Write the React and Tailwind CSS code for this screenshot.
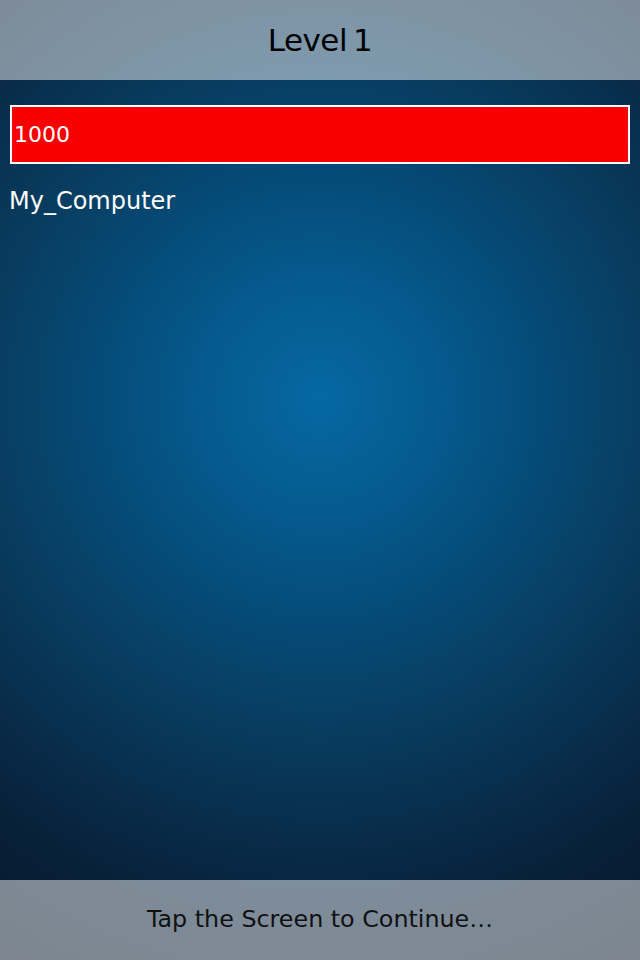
import React from "react";

const App = () => {
  return (
    <div className="flex h-[960px] w-[640px] flex-col bg-[radial-gradient(circle_at_50%_41.5%,#0668a2_0px,#055a8e_120px,#054a76_230px,#083e62_320px,#082f4e_420px,#08213a_520px,#061728_650px)] font-['DejaVu_Sans','Verdana',sans-serif]">
      <header className="flex h-[80px] shrink-0 items-center justify-center bg-white/[0.48]">
        <h1 className="text-[31px] leading-none tracking-[-0.5px] text-black">
          Level<span className="ml-[6px]">1</span>
        </h1>
      </header>

      <main className="flex-1 px-[10px] pt-[25px]">
        <div className="flex h-[59px] items-center border-2 border-white bg-[#f80000] pl-[2px]">
          <span className="text-[22px] leading-none text-white">1000</span>
        </div>
        <p className="-ml-[1px] mt-[22px] text-[24px] leading-[30px] text-white">
          My_Computer
        </p>
      </main>

      <footer className="flex h-[80px] shrink-0 items-center justify-center bg-white/[0.48]">
        <span className="text-[23.8px] leading-none text-[#111]">
          Tap the Screen to Continue…
        </span>
      </footer>
    </div>
  );
};

export default App;
